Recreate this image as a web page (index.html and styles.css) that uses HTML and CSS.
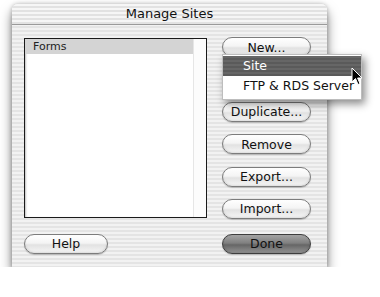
FILE: index.html
```html
<!DOCTYPE html>
<html lang="en">
<head>
  <meta charset="UTF-8">
  <title>Manage Sites</title>
  <link rel="stylesheet" href="styles.css">
</head>

<body>
  <div class="window">
    <div class="titlebar">Manage Sites</div>

    <div class="content">
      <div class="list">
        <div class="list-main">
          <div class="list-header">Forms</div>
        </div>
        <div class="list-scroll"></div>
      </div>

      <div class="side">
        <button class="btn">New...</button>
        <!-- Edit... button, covered by the popup -->
        <button class="btn" aria-label="Edit"></button>
        <button class="btn">Duplicate...</button>
        <button class="btn">Remove</button>
        <button class="btn">Export...</button>
        <button class="btn">Import...</button>
      </div>
    </div>

    <div class="footer">
      <button class="btn btn-help">Help</button>
      <button class="btn btn-done">Done</button>
    </div>

    <!-- popup from New... -->
    <div class="menu">
      <div class="menu-item active">Site</div>
      <div class="menu-item">FTP &amp; RDS Server</div>
    </div>

    <svg class="cursor" width="12" height="19" viewBox="0 0 12 19">
      <path d="M1 1 L1 15 L4.5 11.5 L7 17.5 L9 16.6 L6.6 11 L11 11 Z" fill="#000" stroke="#fff" stroke-width="1"/>
    </svg>
  </div>
</body>
</html>
```

FILE: styles.css
```css
* {
  margin: 0;
  padding: 0;
  box-sizing: border-box;
  font-family: "DejaVu Sans", "Liberation Sans", sans-serif;
  color: #111;
}

body {
  background: #fff;
}

.window {
  position: relative;
  width: 315px;
  height: 263px;
  margin: 4px 0 0 12px;
  border-radius: 6px 6px 0 0;
  background: repeating-linear-gradient(to bottom, #f2f2f2 0, #f2f2f2 2px, #e4e4e4 2px, #e4e4e4 4px);
  box-shadow: 0 7px 12px rgba(0, 0, 0, .5), 0 0 4px rgba(0, 0, 0, .25);
}

.titlebar {
  height: 21px;
  line-height: 20px;
  text-align: center;
  font-size: 13px;
  border-bottom: 1px solid #9a9a9a;
  border-radius: 6px 6px 0 0;
  background: repeating-linear-gradient(to bottom, #f6f6f6 0, #f6f6f6 2px, #e2e2e2 2px, #e2e2e2 4px);
}

.content {
  display: grid;
  grid-template-columns: 183px 89px;
  gap: 15px;
  padding: 12px 16px 0 12px;
}

.list {
  display: flex;
  height: 180px;
  margin-top: 1px;
  border: 1px solid #1a1a1a;
  background: #fff;
  box-shadow: inset 1px 1px 2px rgba(0, 0, 0, .25);
}

.list-main {
  flex: 1;
}

.list-header {
  height: 15px;
  line-height: 15px;
  padding-left: 8px;
  font-size: 11px;
  background: #d4d4d4;
  color: #222;
}

.list-scroll {
  width: 13px;
  border-left: 1px solid #e6e6e6;
  background: #fcfcfc;
}

.side {
  display: flex;
  flex-direction: column;
  gap: 12.4px;
}

.btn {
  height: 20px;
  border: 1px solid #7c7c7c;
  border-radius: 10px;
  font-size: 12.5px;
  line-height: 17px;
  text-align: center;
  background: linear-gradient(to bottom, #ffffff 0%, #f4f4f4 45%, #e2e2e2 55%, #f6f6f6 100%);
  box-shadow: 0 1px 1px rgba(0, 0, 0, .2), inset 0 -1px 2px rgba(0, 0, 0, .1);
}

.footer {
  display: flex;
  justify-content: space-between;
  padding: 15px 16px 0 12px;
}

.btn-help {
  width: 84px;
}

.btn-done {
  width: 89px;
  border-color: #3e3e3e;
  background: linear-gradient(to bottom, #a4a4a4 0%, #808080 45%, #666 55%, #949494 100%);
}

.menu {
  position: absolute;
  left: 210px;
  top: 50px;
  width: 140px;
  padding: 1px 0 3px;
  background: #fff;
  border: 1px solid #bdbdbd;
  box-shadow: 3px 4px 8px rgba(0, 0, 0, .45);
}

.menu-item {
  height: 20px;
  line-height: 20px;
  padding-left: 20px;
  font-size: 12.5px;
  white-space: nowrap;
}

.menu-item.active {
  color: #fff;
  background: repeating-linear-gradient(to bottom, #666 0, #666 2px, #5a5a5a 2px, #5a5a5a 4px);
}

.cursor {
  position: absolute;
  left: 339px;
  top: 63px;
}
```
